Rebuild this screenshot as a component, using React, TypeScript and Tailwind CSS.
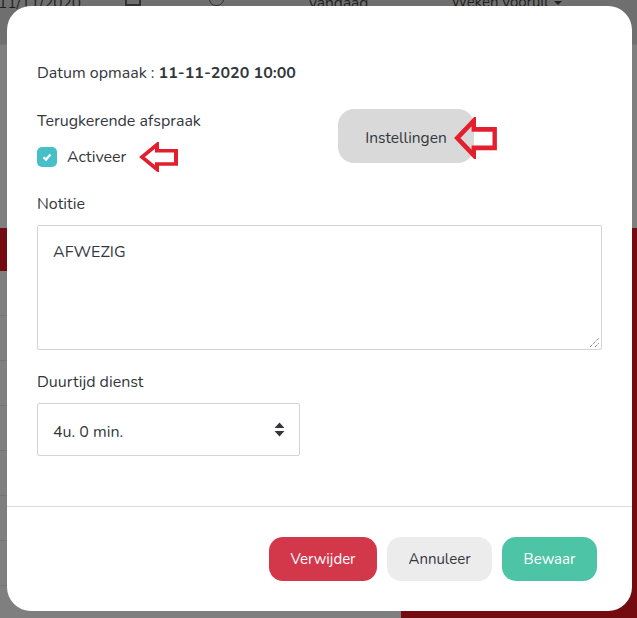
import React from "react";

function Arrow({ className }: { className: string }) {
  return (
    <svg className={className} viewBox="0 0 40 34" fill="none" preserveAspectRatio="none">
      <path d="M3 17 L18 3 V10 H37 V25 H18 V31 Z" stroke="#e41f2d" strokeWidth="4" fill="none" strokeLinejoin="miter" />
    </svg>
  );
}

export default function App() {
  return (
    <div className="relative h-[618px] w-[637px] overflow-hidden bg-[#7f7f7f] font-['Nunito','Lato','Liberation_Sans',sans-serif] text-[16px] text-[#33373d]">
      {/* page behind the dialog */}
      <div className="flex h-[44px] items-start bg-[#6f6f6f] text-[#1f1f1f]">
        <span className="-ml-[2px] -mt-[9px] w-[127px] text-[15.5px]">11/11/2020</span>
        <span className="-mt-[6px] h-[12px] w-[16px] border-2 border-[#333]" />
        <span className="-mt-[8px] ml-[68px] h-[14px] w-[15px] rounded-full border border-[#333]" />
        <span className="-mt-[9px] ml-[85px] w-[142px] text-[15.5px]">vandaag</span>
        <span className="-mt-[9px] text-[15px]">Weken vooruit</span>
        <span className="ml-[5px] mt-[1px] h-0 w-0 border-x-[4px] border-t-[4px] border-x-transparent border-t-[#222]" />
      </div>
      <div className="h-[184px] border-t border-[#767676]" />
      <div className="h-[43px] bg-[#730b10]" />
      <div className="flex">
        <div className="w-[401px]">
          <div className="h-[45px] border-b border-[#747474]" />
          <div className="h-[45px] border-b border-[#747474]" />
          <div className="h-[45px] border-b border-[#747474]" />
          <div className="h-[45px] border-b border-[#747474]" />
          <div className="h-[45px] border-b border-[#747474]" />
          <div className="h-[45px] border-b border-[#747474]" />
          <div className="h-[45px] border-b border-[#747474]" />
        </div>
        <div className="h-[347px] flex-1 bg-[#730b10]" />
      </div>

      {/* dialog */}
      <div className="absolute left-[7px] top-[6px] flex h-[605px] w-[625px] flex-col rounded-[24px] bg-white">
        <div className="flex-1 px-[30px] pt-[57px]">
          <p className="leading-5">
            Datum opmaak : <b className="font-bold">11-11-2020 10:00</b>
          </p>
          <div className="mt-[28px] flex items-start">
            <div className="w-[301px]">
              <p className="leading-5">Terugkerende afspraak</p>
              <div className="mt-[15px] flex h-[22px] items-center gap-[10px]">
                <span className="flex h-5 w-5 items-center justify-center rounded-[5px] bg-[#45c0c8]">
                  <svg width="12" height="12" viewBox="0 0 12 12" fill="none">
                    <path d="M2.5 6.2 L5 8.6 L9.5 3.6" stroke="white" strokeWidth="2.2" />
                  </svg>
                </span>
                <span>Activeer</span>
                <Arrow className="ml-[3px] h-[30px] w-[40px]" />
              </div>
            </div>
            <div className="-mt-[2px] flex items-center">
              <button className="h-[54px] w-[136px] rounded-[16px] bg-[#d9d9d9] pt-[4px] text-[15.5px] text-[#33373d]">Instellingen</button>
              <Arrow className="-ml-[20px] mt-[4px] h-[42px] w-[44px]" />
            </div>
          </div>
          <p className="mt-[26px] leading-5">Notitie</p>
          <div className="relative mt-[11px] h-[125px] w-[565px] rounded-[2px] border border-[#d4d4d4] px-[15px] py-[16px] leading-5">
            AFWEZIG
            <svg className="absolute bottom-[1px] right-[1px]" width="11" height="11" viewBox="0 0 11 11" fill="none">
              <path d="M1 10 L10 1 M6 10 L10 6" stroke="#555" strokeWidth="1" strokeDasharray="1 1" />
            </svg>
          </div>
          <p className="mt-[22px] leading-5">Duurtijd dienst</p>
          <div className="mt-[11px] flex h-[53px] w-[263px] items-center justify-between rounded-[2px] border border-[#d4d4d4] pl-[15px] pr-[14px]">
            <span className="mt-[4px]">4u. 0 min.</span>
            <svg width="11" height="15" viewBox="0 0 11 15" fill="#33373d">
              <path d="M5.5 0.5 L10.5 6 H0.5 Z M5.5 14.5 L0.5 9 H10.5 Z" />
            </svg>
          </div>
        </div>
        <div className="flex h-[105px] items-start justify-end gap-[10px] border-t border-[#dadada] pr-[35px] pt-[30px] text-[15px]">
          <button className="h-[44px] w-[108px] rounded-[14px] bg-[#d2374a] text-white">Verwijder</button>
          <button className="h-[44px] w-[105px] rounded-[14px] bg-[#ececec] text-[#33373d]">Annuleer</button>
          <button className="h-[44px] w-[95px] rounded-[14px] bg-[#4dc4a6] text-white">Bewaar</button>
        </div>
      </div>
    </div>
  );
}
